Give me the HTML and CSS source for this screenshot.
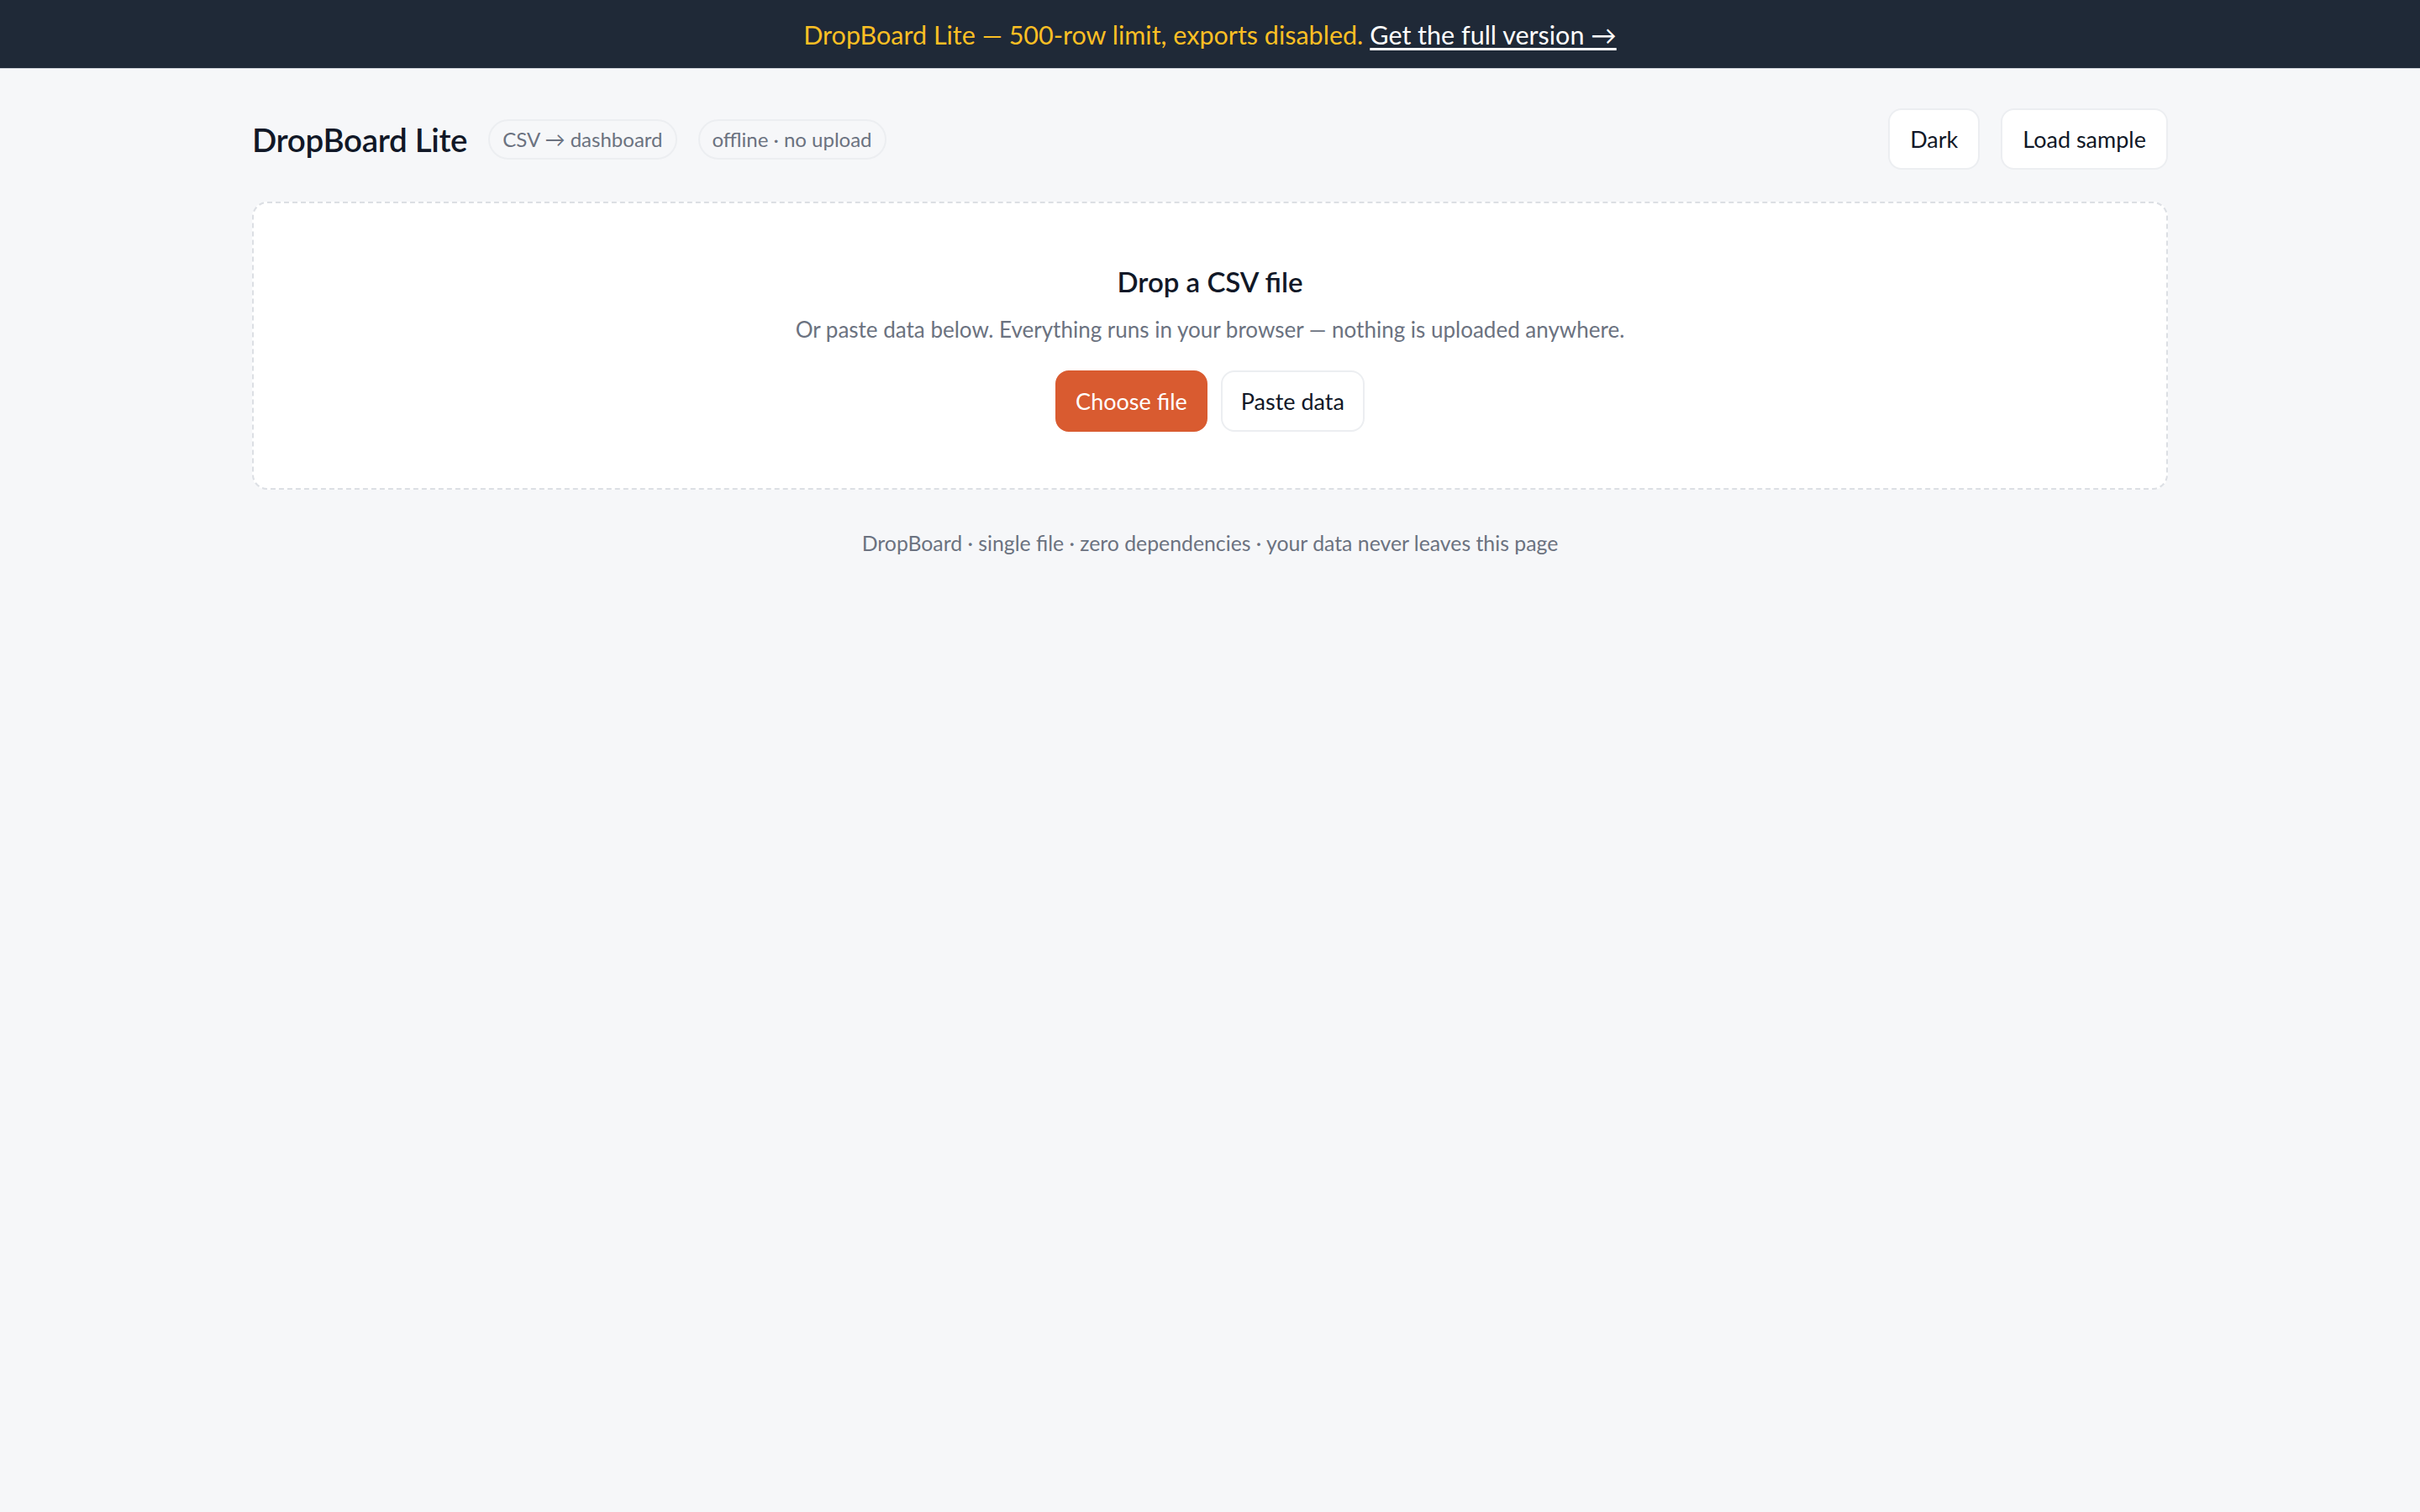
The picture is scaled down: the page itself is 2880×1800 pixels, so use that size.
FILE: index.html
```html
<!DOCTYPE html>
<html lang="en">
<head>
<meta charset="utf-8">
<title>DropBoard Lite</title>
<link rel="stylesheet" href="styles.css">
</head>
<body>
<div class="banner">
  <span class="banner-text">DropBoard Lite — 500-row limit, exports disabled.</span>
  <a class="banner-link" href="#">Get the full version →</a>
</div>
<main class="wrap">
  <header class="topbar">
    <div class="brand">
      <h1 class="title">DropBoard Lite</h1>
      <span class="pill">CSV → dashboard</span>
      <span class="pill">offline · no upload</span>
    </div>
    <div class="actions">
      <button class="btn">Dark</button>
      <button class="btn">Load sample</button>
    </div>
  </header>
  <section class="drop">
    <h2 class="drop-title">Drop a CSV file</h2>
    <p class="drop-sub">Or paste data below. Everything runs in your browser — nothing is uploaded anywhere.</p>
    <div class="drop-actions">
      <button class="btn btn-primary">Choose file</button>
      <button class="btn">Paste data</button>
    </div>
  </section>
  <footer class="foot">DropBoard · single file · zero dependencies · your data never leaves this page</footer>
</main>
</body>
</html>
```
FILE: styles.css
```css
* { box-sizing: border-box; }
html, body { margin: 0; padding: 0; }
body {
  background: #f6f7f9;
  color: #111827;
  font-family: Lato, "Noto Sans", sans-serif;
  font-size: 28px;
}
.banner {
  background: #1f2937;
  height: 82px;
  display: flex;
  align-items: center;
  justify-content: center;
  gap: 8px;
  font-size: 30.5px;
  border-bottom: 1px solid #cfd3d9;
}
.banner-text { color: #fbbf24; }
.banner-link {
  color: #ffffff;
  text-decoration: underline;
  text-decoration-thickness: 3px;
  text-underline-offset: 4px;
}
.wrap {
  max-width: 2280px;
  margin: 0 auto;
}
.topbar {
  display: flex;
  align-items: center;
  justify-content: space-between;
  padding: 47px 0 38px;
}
.brand { display: flex; align-items: center; gap: 25px; }
.title { margin: 0; font-size: 38.5px; font-weight: 600; letter-spacing: -0.3px; }
.pill {
  font-size: 24px;
  color: #6b7280;
  border: 2px solid #eceef1;
  border-radius: 999px;
  padding: 5px 15px;
  line-height: 34px;
}
.actions { display: flex; gap: 25px; }
.btn {
  font-family: inherit;
  font-size: 27px;
  line-height: 41px;
  padding: 14px 24px;
  background: #ffffff;
  color: #111827;
  border: 2px solid #eceef1;
  border-radius: 16px;
  cursor: pointer;
}
.btn-primary {
  background: #d95b30;
  border-color: #d95b30;
  color: #ffffff;
}
.drop {
  background: #ffffff;
  border: 2px dashed #dcdfe4;
  border-radius: 18px;
  padding: 72px 48px 67px;
  text-align: center;
}
.drop-title { margin: 0 0 16px; font-size: 33px; line-height: 43px; font-weight: 600; }
.drop-sub { margin: 0 0 29px; color: #6b7280; font-size: 26px; line-height: 39px; }
.drop-actions { display: flex; justify-content: center; gap: 16px; }
.drop-actions .btn { padding-left: 22px; padding-right: 22px; }
.foot {
  text-align: center;
  color: #6b7280;
  font-size: 24.8px;
  line-height: 36px;
  padding: 46px 0;
}
```
